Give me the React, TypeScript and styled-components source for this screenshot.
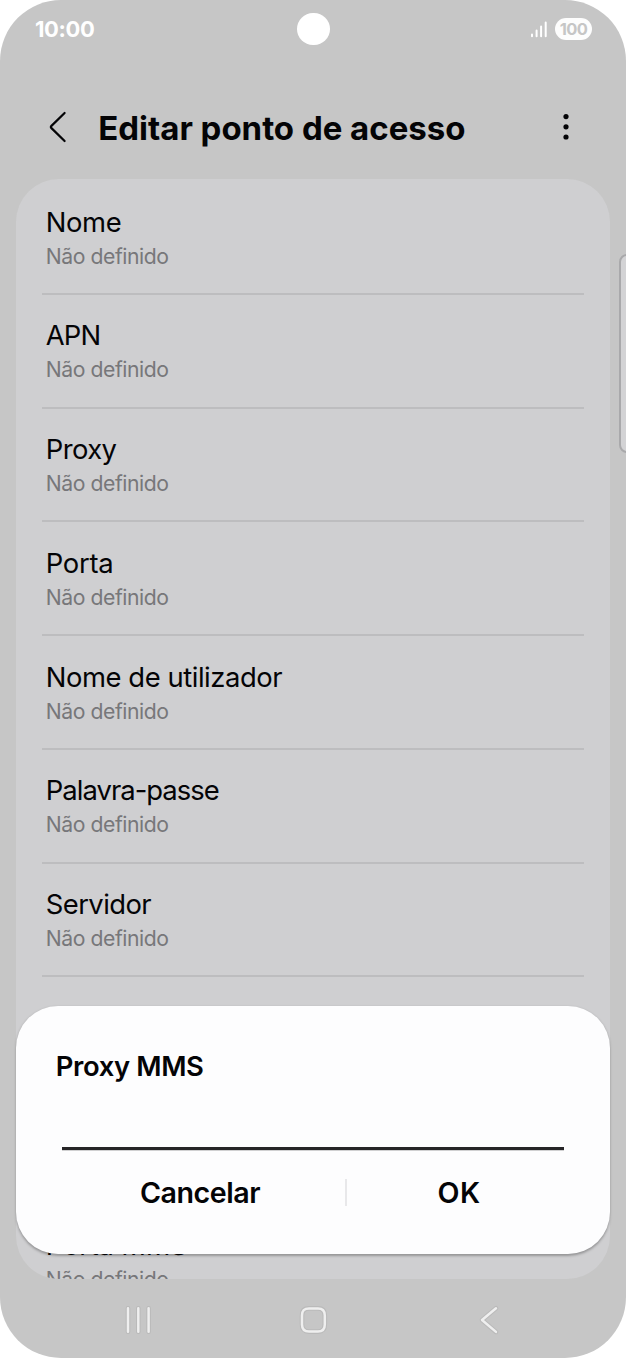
import React from 'react';
import styled, { createGlobalStyle } from 'styled-components';

const GlobalStyle = createGlobalStyle`
  *, *::before, *::after { box-sizing: border-box; }
  body { margin: 0; background: #fff; }
`;

const Phone = styled.div`
  position: relative;
  display: flex;
  flex-direction: column;
  width: 626px;
  height: 1358px;
  overflow: hidden;
  border-radius: 61px;
  background: #c6c6c6;
  font-family: Inter, 'Liberation Sans', sans-serif;
  color: #040406;
`;

const StatusBar = styled.header`
  display: grid;
  grid-template-columns: 1fr 33px 1fr;
  align-items: center;
  flex: none;
  height: 58px;
  padding: 0 34px 0 35px;
`;

const Clock = styled.time`
  font-size: 22px;
  line-height: 28px;
  font-weight: 700;
  letter-spacing: -0.4px;
  color: #fff;
`;

const Camera = styled.div`
  width: 32.5px;
  height: 32.5px;
  border-radius: 50%;
  background: #fff;
`;

const StatusIcons = styled.div`
  display: flex;
  align-items: center;
  justify-content: flex-end;
  gap: 7px;
`;

const Battery = styled.div`
  width: 37px;
  height: 22px;
  border-radius: 11px;
  background: #fdfdfd;
  color: #c6c6c6;
  font-size: 16.5px;
  line-height: 22px;
  font-weight: 700;
  letter-spacing: -0.6px;
  text-align: center;
`;

const TitleBar = styled.div`
  display: flex;
  align-items: center;
  flex: none;
  height: 121.4px;
  padding: 17.5px 50px 0 48px;
`;

const IconButton = styled.button`
  display: flex;
  padding: 0;
  border: 0;
  background: none;
  color: inherit;
`;

const TitleSlot = styled.div`
  display: flex;
  align-items: center;
  flex: 1;
`;

const Title = styled.h1`
  flex: 1;
  margin: 1px 0 0 30.3px;
  font-size: 33px;
  line-height: 40px;
  font-weight: 700;
  letter-spacing: -0.02px;
  white-space: nowrap;
`;

const SettingsCard = styled.main`
  flex: none;
  width: 593.5px;
  height: 1100px;
  margin-left: 16.3px;
  padding: 1.7px 26px 0;
  overflow: hidden;
  border-radius: 43px;
  background: #cfcfd1;
`;

const SettingRow = styled.div`
  height: 113.75px;
  padding: 23.5px 4px 0 3.5px;
  border-bottom: 2px solid #bdbdbf;
`;

const CoveredRows = styled.div`
  height: 227.5px;
`;

const SettingName = styled.div<{ $tracking: number }>`
  font-size: 27.4px;
  line-height: 34px;
  letter-spacing: ${({ $tracking }) => $tracking}px;
`;

const SettingValue = styled.div`
  margin-top: 3px;
  font-size: 21.2px;
  line-height: 28px;
  letter-spacing: -0.46px;
  color: #77777a;
`;

const EdgeHandle = styled.div`
  position: absolute;
  top: 254px;
  right: -10px;
  width: 17.5px;
  height: 199px;
  border: 2px solid #a9a9ab;
  border-radius: 8px;
  background: #d3d3d5;
`;

const Dialog = styled.section`
  position: absolute;
  top: 1006.3px;
  left: 16.3px;
  display: flex;
  flex-direction: column;
  width: 593.5px;
  height: 247.5px;
  padding: 42.7px 46px 0 45.7px;
  border-radius: 42px;
  background: #fdfdfe;
  box-shadow: 0 1.5px 2.5px rgba(0, 0, 0, 0.28);
`;

const DialogTitle = styled.h2`
  margin: 0 0 0 -6.2px;
  font-size: 27.4px;
  line-height: 34px;
  font-weight: 600;
  letter-spacing: -0.36px;
`;

const TextField = styled.div`
  height: 67px;
  border-bottom: 3px solid #262527;
  box-shadow: 0 1px #d0d0d1;
`;

const Actions = styled.div`
  display: grid;
  grid-template-columns: 283px 2px 1fr;
  align-items: center;
  margin-top: 26px;
`;

const Divider = styled.span`
  height: 27px;
  margin-top: -1px;
  background: #e8e8ea;
`;

const ActionButton = styled.button<{ $tracking: number; $shift: number }>`
  padding: 0 0 0 ${({ $shift }) => $shift}px;
  border: 0;
  background: none;
  color: inherit;
  font: 600 28.6px/34px Inter, 'Liberation Sans', sans-serif;
  letter-spacing: ${({ $tracking }) => $tracking}px;
  text-align: left;
`;

const NavBar = styled.nav`
  display: flex;
  align-items: center;
  justify-content: space-between;
  flex: 1;
  padding: 2.5px 121px 0 121px;
`;

const settings = [
  { name: 'Nome', tracking: -0.4 },
  { name: 'APN', tracking: -0.9 },
  { name: 'Proxy', tracking: -0.6 },
  { name: 'Porta', tracking: -0.3 },
  { name: 'Nome de utilizador', tracking: -0.44 },
  { name: 'Palavra-passe', tracking: -0.96 },
  { name: 'Servidor', tracking: -0.58 },
];

const SignalIcon = () => (
  <svg width="18" height="18" viewBox="0 0 18 18" fill="none" stroke="#fff" strokeWidth="2" strokeLinecap="round">
    <path d="M2 14.4V16.2M6.6 10.6V16.2M11.1 6.4V16.2M15.7 2.6V16.2" />
  </svg>
);

const BackIcon = () => (
  <svg width="20" height="32" viewBox="0 0 20 32" fill="none" stroke="currentColor" strokeWidth="2.2" strokeLinecap="round" strokeLinejoin="round">
    <path d="M16.6 2L3.2 15.1Q2.4 16 3.2 16.9L16.6 30" />
  </svg>
);

const MoreIcon = () => (
  <svg width="20" height="32" viewBox="0 0 20 32" fill="currentColor">
    <circle cx="10" cy="5.6" r="2.6" />
    <circle cx="10" cy="15.8" r="2.6" />
    <circle cx="10" cy="26" r="2.6" />
  </svg>
);

const NavIcon = ({ d }: { d: string }) => (
  <svg width="34" height="34" viewBox="0 0 34 34" fill="none" strokeLinecap="round" strokeLinejoin="round">
    <path d={d} stroke="#bababa" strokeWidth="4.6" />
    <path d={d} stroke="#efefef" strokeWidth="2.5" />
  </svg>
);

export default function App() {
  return (
    <>
      <GlobalStyle />
      <Phone>
        <StatusBar>
          <Clock>10:00</Clock>
          <Camera />
          <StatusIcons>
            <SignalIcon />
            <Battery>100</Battery>
          </StatusIcons>
        </StatusBar>
        <TitleBar>
          <TitleSlot>
            <IconButton aria-label="Voltar"><BackIcon /></IconButton>
            <Title>Editar ponto de acesso</Title>
          </TitleSlot>
          <IconButton aria-label="Mais opções"><MoreIcon /></IconButton>
        </TitleBar>
        <SettingsCard>
          {settings.map(({ name, tracking }) => (
            <SettingRow key={name}>
              <SettingName $tracking={tracking}>{name}</SettingName>
              <SettingValue>Não definido</SettingValue>
            </SettingRow>
          ))}
          <CoveredRows />
          <SettingRow>
            <SettingName $tracking={-0.2}>Porta MMS</SettingName>
            <SettingValue>Não definido</SettingValue>
          </SettingRow>
        </SettingsCard>
        <NavBar>
          <IconButton aria-label="Recentes"><NavIcon d="M7 5.3V28.7M17.3 5.3V28.7M27.6 5.3V28.7" /></IconButton>
          <IconButton aria-label="Início">
            <NavIcon d="M13 5.4H22Q28.8 5.4 28.8 12.4V21.6Q28.8 28.6 22 28.6H13Q6 28.6 6 21.6V12.4Q6 5.4 13 5.4Z" />
          </IconButton>
          <IconButton aria-label="Anterior"><NavIcon d="M25 5.3L11 17L25 28.9" /></IconButton>
        </NavBar>
        <EdgeHandle />
        <Dialog role="dialog">
          <DialogTitle>Proxy MMS</DialogTitle>
          <TextField />
          <Actions>
            <ActionButton $tracking={-0.45} $shift={78}>Cancelar</ActionButton>
            <Divider />
            <ActionButton $tracking={0.6} $shift={90.5}>OK</ActionButton>
          </Actions>
        </Dialog>
      </Phone>
    </>
  );
}
